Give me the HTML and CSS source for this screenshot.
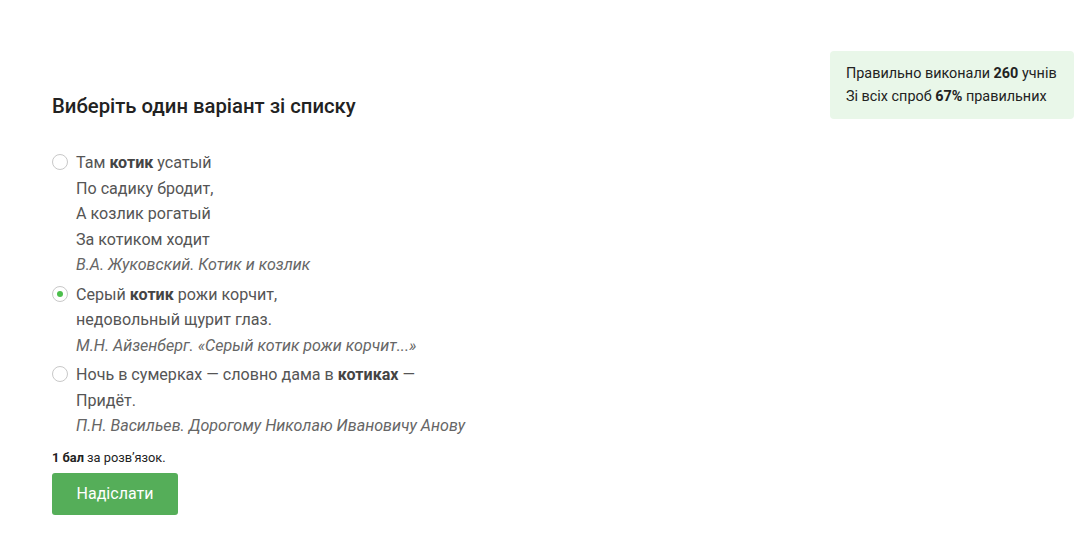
FILE: index.html
```html
<!DOCTYPE html>
<html lang="uk">
<head>
<meta charset="utf-8">
<link rel="stylesheet" href="styles.css">
</head>
<body>
<div class="page">
  <div class="main">
    <h2 class="title">Виберіть один варіант зі списку</h2>
    <div class="options">
      <label class="option">
        <span class="radio"></span>
        <span class="text">Там <b>котик</b> усатый<br>По садику бродит,<br>А козлик рогатый<br>За котиком ходит<br><i>В.А. Жуковский. Котик и козлик</i></span>
      </label>
      <label class="option">
        <span class="radio checked"></span>
        <span class="text">Серый <b>котик</b> рожи корчит,<br>недовольный щурит глаз.<br><i>М.Н. Айзенберг. «Серый котик рожи корчит...»</i></span>
      </label>
      <label class="option">
        <span class="radio"></span>
        <span class="text">Ночь в сумерках — словно дама в <b>котиках</b> —<br>Придёт.<br><i>П.Н. Васильев. Дорогому Николаю Ивановичу Анову</i></span>
      </label>
    </div>
    <div class="points"><b>1 бал</b> за розв’язок.</div>
    <button class="submit">Надіслати</button>
  </div>
  <div class="stats">
    <div>Правильно виконали <b>260</b> учнів</div>
    <div>Зі всіх спроб <b>67%</b> правильних</div>
  </div>
</div>
</body>
</html>
```
FILE: styles.css
```css
html, body {
  margin: 0;
  padding: 0;
  background: #fff;
}
body {
  font-family: Roboto, "Noto Sans", sans-serif;
  color: #333;
}
.page {
  display: flex;
  justify-content: space-between;
  padding: 51px 15px 0 52px;
}
.main {
  display: flex;
  flex-direction: column;
  align-items: flex-start;
}
.title {
  margin: 42px 0 0;
  font-size: 20.3px;
  font-weight: 500;
  line-height: 26px;
  color: #222;
}
.options {
  margin-top: 31px;
  display: flex;
  flex-direction: column;
  gap: 4px;
}
.option {
  display: flex;
  align-items: flex-start;
  gap: 8px;
  font-size: 16.1px;
  line-height: 25.5px;
  color: #555;
}
.option b {
  font-weight: 700;
  color: #444;
}
.option i {
  color: #666;
}
.radio {
  flex: none;
  width: 14px;
  height: 14px;
  border: 1px solid #c8c8c8;
  border-radius: 50%;
  margin-top: 4px;
  position: relative;
  background: #fff;
}
.radio.checked::after {
  content: "";
  position: absolute;
  left: 4px;
  top: 4px;
  width: 6px;
  height: 6px;
  border-radius: 50%;
  background: #4cbf4c;
}
.points {
  margin-top: 11px;
  font-size: 12.8px;
  line-height: 16px;
  color: #222;
}
.points b {
  font-weight: 700;
}
.submit {
  margin-top: 7px;
  width: 126px;
  height: 42px;
  border: none;
  border-radius: 3px;
  background: #55ae59;
  color: #fff;
  font-family: Roboto, "Noto Sans", sans-serif;
  font-size: 16px;
  font-weight: 400;
}
.stats {
  flex: none;
  width: 244px;
  height: 68px;
  box-sizing: border-box;
  padding: 11px 16px;
  background: #e9f7e9;
  border-radius: 4px;
  font-size: 14.4px;
  line-height: 23px;
  color: #222;
  white-space: nowrap;
}
.stats b {
  font-weight: 700;
}
```
